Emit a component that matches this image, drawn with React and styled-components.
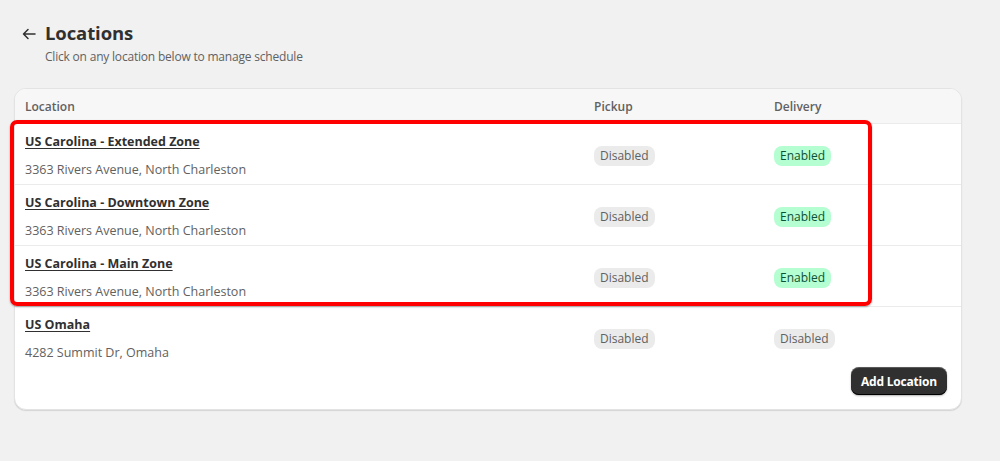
import React from "react";
import styled, { createGlobalStyle } from "styled-components";

const Global = createGlobalStyle`
  body {
    margin: 0;
    background: #f1f1f1;
    font-family: "Open Sans", "Noto Sans", sans-serif;
    color: #303030;
  }
`;

const Page = styled.div`
  padding: 20px 38px 40px 14px;
`;

const Head = styled.div`
  display: flex;
  align-items: flex-start;
  gap: 6px;
  padding-left: 5px;
  margin-bottom: 22px;
`;

const Back = styled.button`
  border: 0;
  background: none;
  padding: 0;
  margin-top: 4px;
  width: 20px;
  height: 20px;
  display: flex;
  align-items: center;
  justify-content: center;
  color: #303030;
  cursor: pointer;
`;

const Title = styled.h1`
  margin: 0;
  font-size: 18.5px;
  line-height: 26px;
  font-weight: 700;
  letter-spacing: -0.1px;
`;

const Sub = styled.p`
  margin: 2px 0 0;
  font-size: 12px;
  line-height: 18px;
  letter-spacing: -0.2px;
  color: #616161;
`;

const CardWrap = styled.div`
  position: relative;
`;

const Card = styled.div`
  background: #fff;
  border: 1px solid #e3e3e3;
  border-radius: 12px;
  box-shadow: 0 1px 1px rgba(0, 0, 0, 0.12);
  overflow: hidden;
`;

const Row = styled.div`
  display: grid;
  grid-template-columns: 567px 180px 1fr;
  align-items: center;
  border-top: ${(p) => (p.$first ? "none" : "1px solid #ebebeb")};
  background: ${(p) => (p.$head ? "#f7f7f7" : "#fff")};
  height: ${(p) => (p.$head ? "34px" : "60px")};
  & > * {
    padding-left: 10px;
  }
  & > *:not(:first-child) {
    padding-left: 12px;
  }
`;

const HeadCell = styled.div`
  font-size: 12px;
  font-weight: 600;
  color: #616161;
`;

const Name = styled.a`
  display: block;
  margin-top: 3px;
  font-size: 12.5px;
  font-weight: 700;
  line-height: 20px;
  color: #303030;
  text-decoration: underline;
  text-underline-offset: 2px;
`;

const Addr = styled.div`
  margin-top: 8px;
  font-size: 12.5px;
  line-height: 20px;
  color: #616161;
`;

const Badge = styled.span`
  display: inline-block;
  padding: 0 6px;
  height: 20px;
  line-height: 20px;
  border-radius: 8px;
  font-size: 12px;
  background: ${(p) => (p.$on ? "#b4fed2" : "#ebebeb")};
  color: ${(p) => (p.$on ? "#0c5132" : "#616161")};
`;

const Footer = styled.div`
  display: flex;
  justify-content: flex-end;
  padding: 0 14px 14px;
`;

const AddButton = styled.button`
  height: 28px;
  padding: 0 10px;
  border: 0;
  border-radius: 8px;
  background: #303030;
  box-shadow: inset 0 -1px 0 #000, inset 0 1px 0 rgba(255, 255, 255, 0.2),
    0 1px 2px rgba(0, 0, 0, 0.3);
  color: #fff;
  font-family: inherit;
  font-size: 12px;
  font-weight: 700;
  letter-spacing: -0.2px;
  cursor: pointer;
`;

const Highlight = styled.div`
  position: absolute;
  left: -4px;
  top: 32px;
  width: 862px;
  height: 186px;
  box-sizing: border-box;
  border: 4px solid #ff0000;
  border-radius: 7px;
  box-shadow: 0 1px 2px rgba(0, 0, 0, 0.35);
  pointer-events: none;
`;

const locations = [
  { name: "US Carolina - Extended Zone", addr: "3363 Rivers Avenue, North Charleston", pickup: false, delivery: true },
  { name: "US Carolina - Downtown Zone", addr: "3363 Rivers Avenue, North Charleston", pickup: false, delivery: true },
  { name: "US Carolina - Main Zone", addr: "3363 Rivers Avenue, North Charleston", pickup: false, delivery: true },
  { name: "US Omaha", addr: "4282 Summit Dr, Omaha", pickup: false, delivery: false },
];

function Status({ on }) {
  return <Badge $on={on}>{on ? "Enabled" : "Disabled"}</Badge>;
}

export default function App() {
  return (
    <Page>
      <Global />
      <Head>
        <Back aria-label="Back">
          <svg width="16" height="16" viewBox="0 0 16 16" fill="none">
            <path
              d="M14 8H2.5M7 3.5 2.5 8 7 12.5"
              stroke="#303030"
              strokeWidth="1.5"
              strokeLinecap="round"
              strokeLinejoin="round"
            />
          </svg>
        </Back>
        <div>
          <Title>Locations</Title>
          <Sub>Click on any location below to manage schedule</Sub>
        </div>
      </Head>
      <CardWrap>
        <Card>
          <Row $head $first>
            <HeadCell>Location</HeadCell>
            <HeadCell>Pickup</HeadCell>
            <HeadCell>Delivery</HeadCell>
          </Row>
          {locations.map((l) => (
            <Row key={l.name}>
              <div>
                <Name href="#">{l.name}</Name>
                <Addr>{l.addr}</Addr>
              </div>
              <div>
                <Status on={l.pickup} />
              </div>
              <div>
                <Status on={l.delivery} />
              </div>
            </Row>
          ))}
          <Footer>
            <AddButton>Add Location</AddButton>
          </Footer>
        </Card>
        <Highlight />
      </CardWrap>
    </Page>
  );
}
